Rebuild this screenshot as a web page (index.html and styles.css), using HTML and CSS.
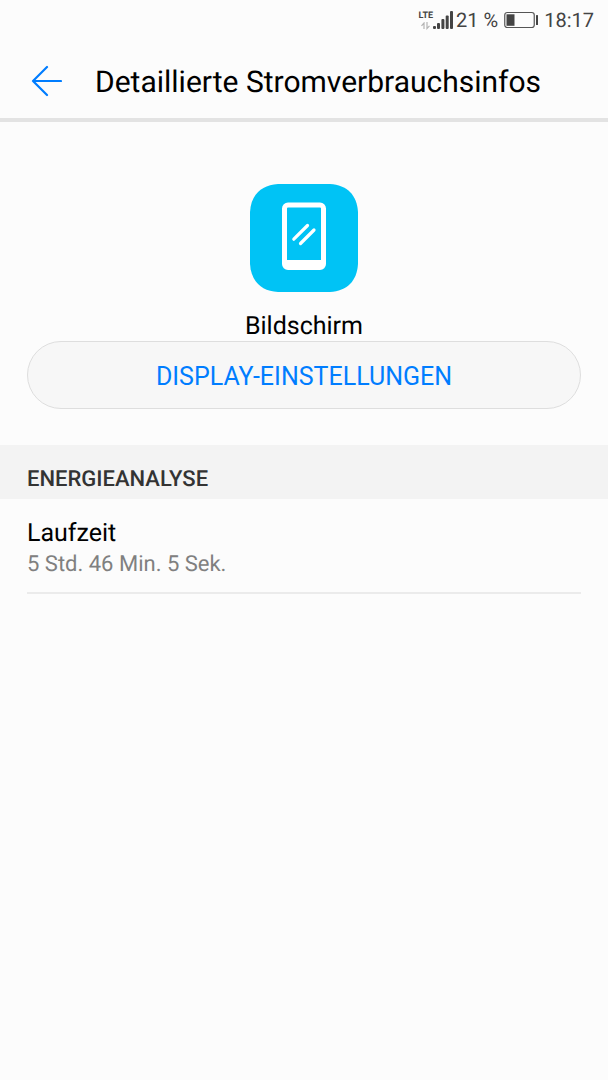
FILE: index.html
```html
<!DOCTYPE html>
<html lang="de">
<head>
<meta charset="utf-8">
<meta name="viewport" content="width=device-width, initial-scale=1">
<title>Detaillierte Stromverbrauchsinfos</title>
<link rel="stylesheet" href="styles.css">
</head>
<body>
<div class="status">
  <div class="network">
    <div class="network-type">
      <span class="lte">LTE</span>
      <svg class="traffic" width="10" height="8" viewBox="0 0 10 8" fill="none" stroke="#b4b4b4" stroke-width="1.200" aria-hidden="true"><path d="M3 7V1L.5 3.800M6 0V6.500L8.500 3.800"/></svg>
    </div>
    <svg class="signal" width="20" height="19" viewBox="0 0 20 19" fill="#444" aria-hidden="true"><rect x="0" y="15" width="3" height="3" rx="1"/><rect x="4" y="12" width="3" height="6" rx="1"/><rect x="8.400" y="8" width="3" height="10" rx="1"/><rect x="12.700" y="4.500" width="3" height="13.500" rx="1"/><rect x="17" y="0" width="3" height="18" rx="1"/></svg>
  </div>
  <span class="percent">21 %</span>
  <svg class="battery" width="35" height="18" viewBox="0 0 35 18" aria-hidden="true"><rect x=".75" y="1.500" width="29.500" height="15" rx="2.500" fill="none" stroke="#555" stroke-width="1.200"/><rect x="2.500" y="3.300" width="8" height="11.500" fill="#444"/><rect x="32" y="4" width="2" height="10" rx=".5" fill="#444"/></svg>
  <time class="clock">18:17</time>
</div>
<header class="header">
  <button class="back" type="button" aria-label="Zurück">
    <svg width="32" height="32" viewBox="0 0 32 32" fill="none" stroke="#007dff" stroke-width="2.200" stroke-linecap="round" stroke-linejoin="round" aria-hidden="true"><path d="M17 2 3 16 17 30M3 16H31"/></svg>
  </button>
  <h1 class="title">Detaillierte Stromverbrauchsinfos</h1>
</header>
<main>
  <section class="app">
    <svg class="app-icon" width="108" height="108" viewBox="0 0 108 108" aria-hidden="true">
      <path fill="#00c3f5" d="M28 0H80C97 1 107 11 108 28V80C107 97 97 107 80 108H28C11 107 1 97 0 80V28C1 11 11 1 28 0Z"/>
      <path fill="#fff" fill-rule="evenodd" d="M38 18.500H70A6 6 0 0 1 76 24.500V80A6 6 0 0 1 70 86H38A6 6 0 0 1 32 80V24.500A6 6 0 0 1 38 18.500ZM38 23.500A1 1 0 0 0 37 24.500V76H71V24.500A1 1 0 0 0 70 23.500Z"/>
      <path fill="none" stroke="#fff" stroke-width="3.200" stroke-linecap="round" d="M43.800 55.200 57.500 41.500M50.500 59.500 64 46"/>
    </svg>
    <h2 class="app-name">Bildschirm</h2>
    <button class="settings" type="button">DISPLAY-EINSTELLUNGEN</button>
  </section>
  <section>
    <h2 class="section-title">ENERGIEANALYSE</h2>
    <dl class="item">
      <dt class="item-name">Laufzeit</dt>
      <dd class="item-value">5 Std. 46 Min. 5 Sek.</dd>
    </dl>
  </section>
</main>
</body>
</html>
```

FILE: styles.css
```css
* { box-sizing: border-box; }
body {
  margin: 0;
  min-height: 100vh;
  background: #fcfcfc;
  color: #000;
  font-family: Roboto, "Liberation Sans", sans-serif;
  text-rendering: geometricPrecision;
}
h1, h2, dl, dd { margin: 0; font-weight: 400; }
svg { display: block; }
button { border: 0; font: inherit; cursor: pointer; }

.status {
  display: flex;
  align-items: center;
  justify-content: flex-end;
  height: 40px;
  padding: 0 14px;
  color: #444;
  font-size: 20px;
  line-height: 24px;
}
.network { display: flex; align-items: flex-end; }
.network-type { display: flex; flex-direction: column; align-items: center; }
.lte {
  font-size: 9px;
  font-weight: 700;
  line-height: 11px;
}
.percent { margin-left: 3px; }
.battery { margin: 0 5px 0 6px; }

.header {
  display: flex;
  align-items: center;
  gap: 33px;
  height: 82px;
  padding: 4px 30px 0;
  border-bottom: 4px solid #e3e3e3;
}
.back { padding: 0; background: none; }
.title { padding-top: 4px; font-size: 30px; line-height: 40px; white-space: nowrap; }

.app {
  display: flex;
  flex-direction: column;
  align-items: center;
  padding: 62px 27px 36px;
}
.app-name { padding-top: 20px; font-size: 25px; line-height: 29px; }
.settings {
  width: 100%;
  height: 68px;
  padding: 2px 0 0;
  border: 1px solid #dedede;
  border-radius: 34px;
  background: #f7f7f7;
  color: #007dff;
  font-size: 25px;
}
.section-title {
  padding: 18px 27px 3px;
  background: #f3f3f3;
  color: #333;
  font-size: 22px;
  font-weight: 500;
  line-height: 33px;
}
.item {
  margin: 0 27px;
  padding: 19px 0 12px;
  border-bottom: 2px solid #ebebeb;
}
.item-name { font-size: 25px; line-height: 32px; }
.item-value { color: #808080; font-size: 22px; line-height: 30px; }
```
